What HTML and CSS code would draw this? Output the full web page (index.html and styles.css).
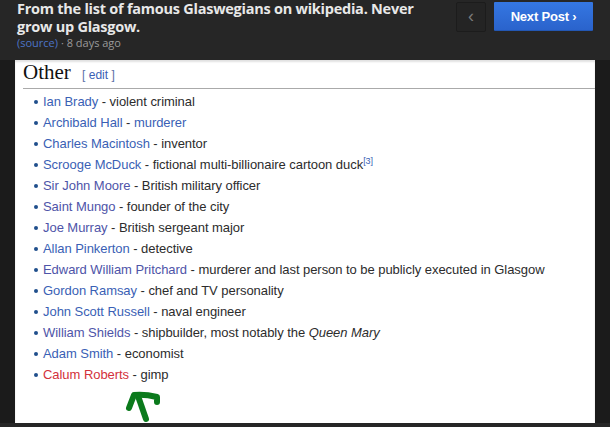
FILE: index.html
```html
<!DOCTYPE html>
<html lang="en">
<head>
    <meta charset="UTF-8">
    <title>From the list of famous Glaswegians on wikipedia</title>
    <link rel="stylesheet" href="styles.css">
</head>
<body>

    <div class="topbar">
        <div class="post-info">
            <h1 class="post-title">From the list of famous Glaswegians on wikipedia. Never grow up Glasgow.</h1>
            <div class="post-meta"><a href="#" class="source">(source)</a> · 8 days ago</div>
        </div>
        <div class="post-nav">
            <button class="prev-btn">&#8249;</button>
            <button class="next-btn">Next Post &#8250;</button>
        </div>
    </div>

    <div class="stage">
        <div class="shot">
            <h2 class="wiki-heading">Other <span class="edit">[ <a href="#">edit</a> ]</span></h2>
            <ul class="wiki-list">
                <li><a href="#">Ian Brady</a> - violent criminal</li>
                <li><a href="#">Archibald Hall</a> - <a href="#">murderer</a></li>
                <li><a href="#">Charles Macintosh</a> - inventor</li>
                <li><a href="#">Scrooge McDuck</a> - fictional multi-billionaire cartoon duck<sup><a href="#">[3]</a></sup></li>
                <li><a href="#" class="visited">Sir John Moore</a> - British military officer</li>
                <li><a href="#" class="visited">Saint Mungo</a> - founder of the city</li>
                <li><a href="#" class="visited">Joe Murray</a> - British sergeant major</li>
                <li><a href="#">Allan Pinkerton</a> - detective</li>
                <li><a href="#" class="visited">Edward William Pritchard</a> - murderer and last person to be publicly executed in Glasgow</li>
                <li><a href="#">Gordon Ramsay</a> - chef and TV personality</li>
                <li><a href="#">John Scott Russell</a> - naval engineer</li>
                <li><a href="#" class="visited">William Shields</a> - shipbuilder, most notably the <i>Queen Mary</i></li>
                <li><a href="#">Adam Smith</a> - economist</li>
                <li><a href="#" class="redlink">Calum Roberts</a> - gimp</li>
            </ul>

            <svg class="scribble" width="40" height="36" viewBox="0 0 40 36">
                <path d="M13 8 L21 31" fill="none" stroke="#0b7a1c" stroke-width="6" stroke-linecap="round"/>
                <path d="M4 20 L9 7 Q20 6 32 9 L32 14" fill="none" stroke="#0b7a1c" stroke-width="6" stroke-linecap="round" stroke-linejoin="round"/>
            </svg>
        </div>
    </div>

    <div class="bottom-strip"></div>

</body>
</html>
```

FILE: styles.css
```css
body {
    margin: 0;
    background-color: #1b1b1b;
    font-family: "Liberation Sans", Arial, sans-serif;
}

.topbar {
    background-color: #262626;
    height: 60px;
    display: flex;
    justify-content: space-between;
    align-items: flex-start;
    padding: 0 17px;
}

.post-info {
    width: 405px;
}

.post-title {
    margin: 0;
    font-family: "Open Sans", sans-serif;
    font-size: 14.5px;
    line-height: 18px;
    font-weight: 700;
    letter-spacing: -0.25px;
    color: #e8e8e8;
}

.post-meta {
    font-family: "Open Sans", sans-serif;
    font-size: 11px;
    line-height: 14px;
    color: #9a9a9a;
}

.post-meta .source {
    color: #4c74c6;
    text-decoration: none;
}

.post-nav {
    display: flex;
    gap: 8px;
    margin-top: 2px;
}

.prev-btn {
    width: 30px;
    height: 30px;
    background-color: #242424;
    border: 1px solid #1c1c1c;
    border-radius: 2px;
    color: #7a7a7a;
    font-size: 18px;
    line-height: 1;
    padding: 0 0 3px;
}

.next-btn {
    width: 99px;
    height: 29px;
    background: linear-gradient(#3577e2, #2a63cc);
    border: none;
    border-bottom: 1px solid #2357b3;
    border-radius: 1px;
    color: #fff;
    font-family: "Liberation Sans", Arial, sans-serif;
    font-size: 13px;
    font-weight: 700;
    letter-spacing: -0.2px;
    padding: 0;
}

.stage {
    padding: 0 15px;
}

.shot {
    position: relative;
    height: 363px;
    background-color: #fff;
    box-shadow: inset 0 2px 2px rgba(0, 0, 0, 0.12);
    padding-left: 8px;
    box-sizing: border-box;
}

.wiki-heading {
    margin: 0;
    font-family: "Liberation Serif", "Times New Roman", serif;
    font-weight: 400;
    font-size: 21px;
    line-height: 25px;
    color: #111;
    border-bottom: 1px solid #aaa;
}

.edit {
    margin-left: 6px;
    font-family: "Liberation Sans", Arial, sans-serif;
    font-size: 12px;
    color: #5a6fa8;
}

.edit a {
    color: #3a5fb5;
    text-decoration: none;
}

.wiki-list {
    list-style: none;
    margin: 2px 0 0;
    padding: 0 0 0 20px;
    font-size: 13px;
    line-height: 21px;
    letter-spacing: -0.05px;
    color: #2c2c2c;
}

.wiki-list li {
    position: relative;
}

.wiki-list li::before {
    content: "";
    position: absolute;
    left: -9px;
    top: 9px;
    width: 4px;
    height: 4px;
    border-radius: 50%;
    background-color: #1f4f8c;
}

.wiki-list a {
    color: #3a5fb5;
    text-decoration: none;
}

.wiki-list a.visited {
    color: #4e54a8;
}

.wiki-list a.redlink {
    color: #d3313b;
}

.wiki-list sup {
    font-size: 9px;
    line-height: 0;
}

.wiki-list i {
    color: #2c2c2c;
}

.scribble {
    position: absolute;
    left: 110px;
    top: 328px;
}

.bottom-strip {
    height: 4px;
    background-color: #262626;
}
```
